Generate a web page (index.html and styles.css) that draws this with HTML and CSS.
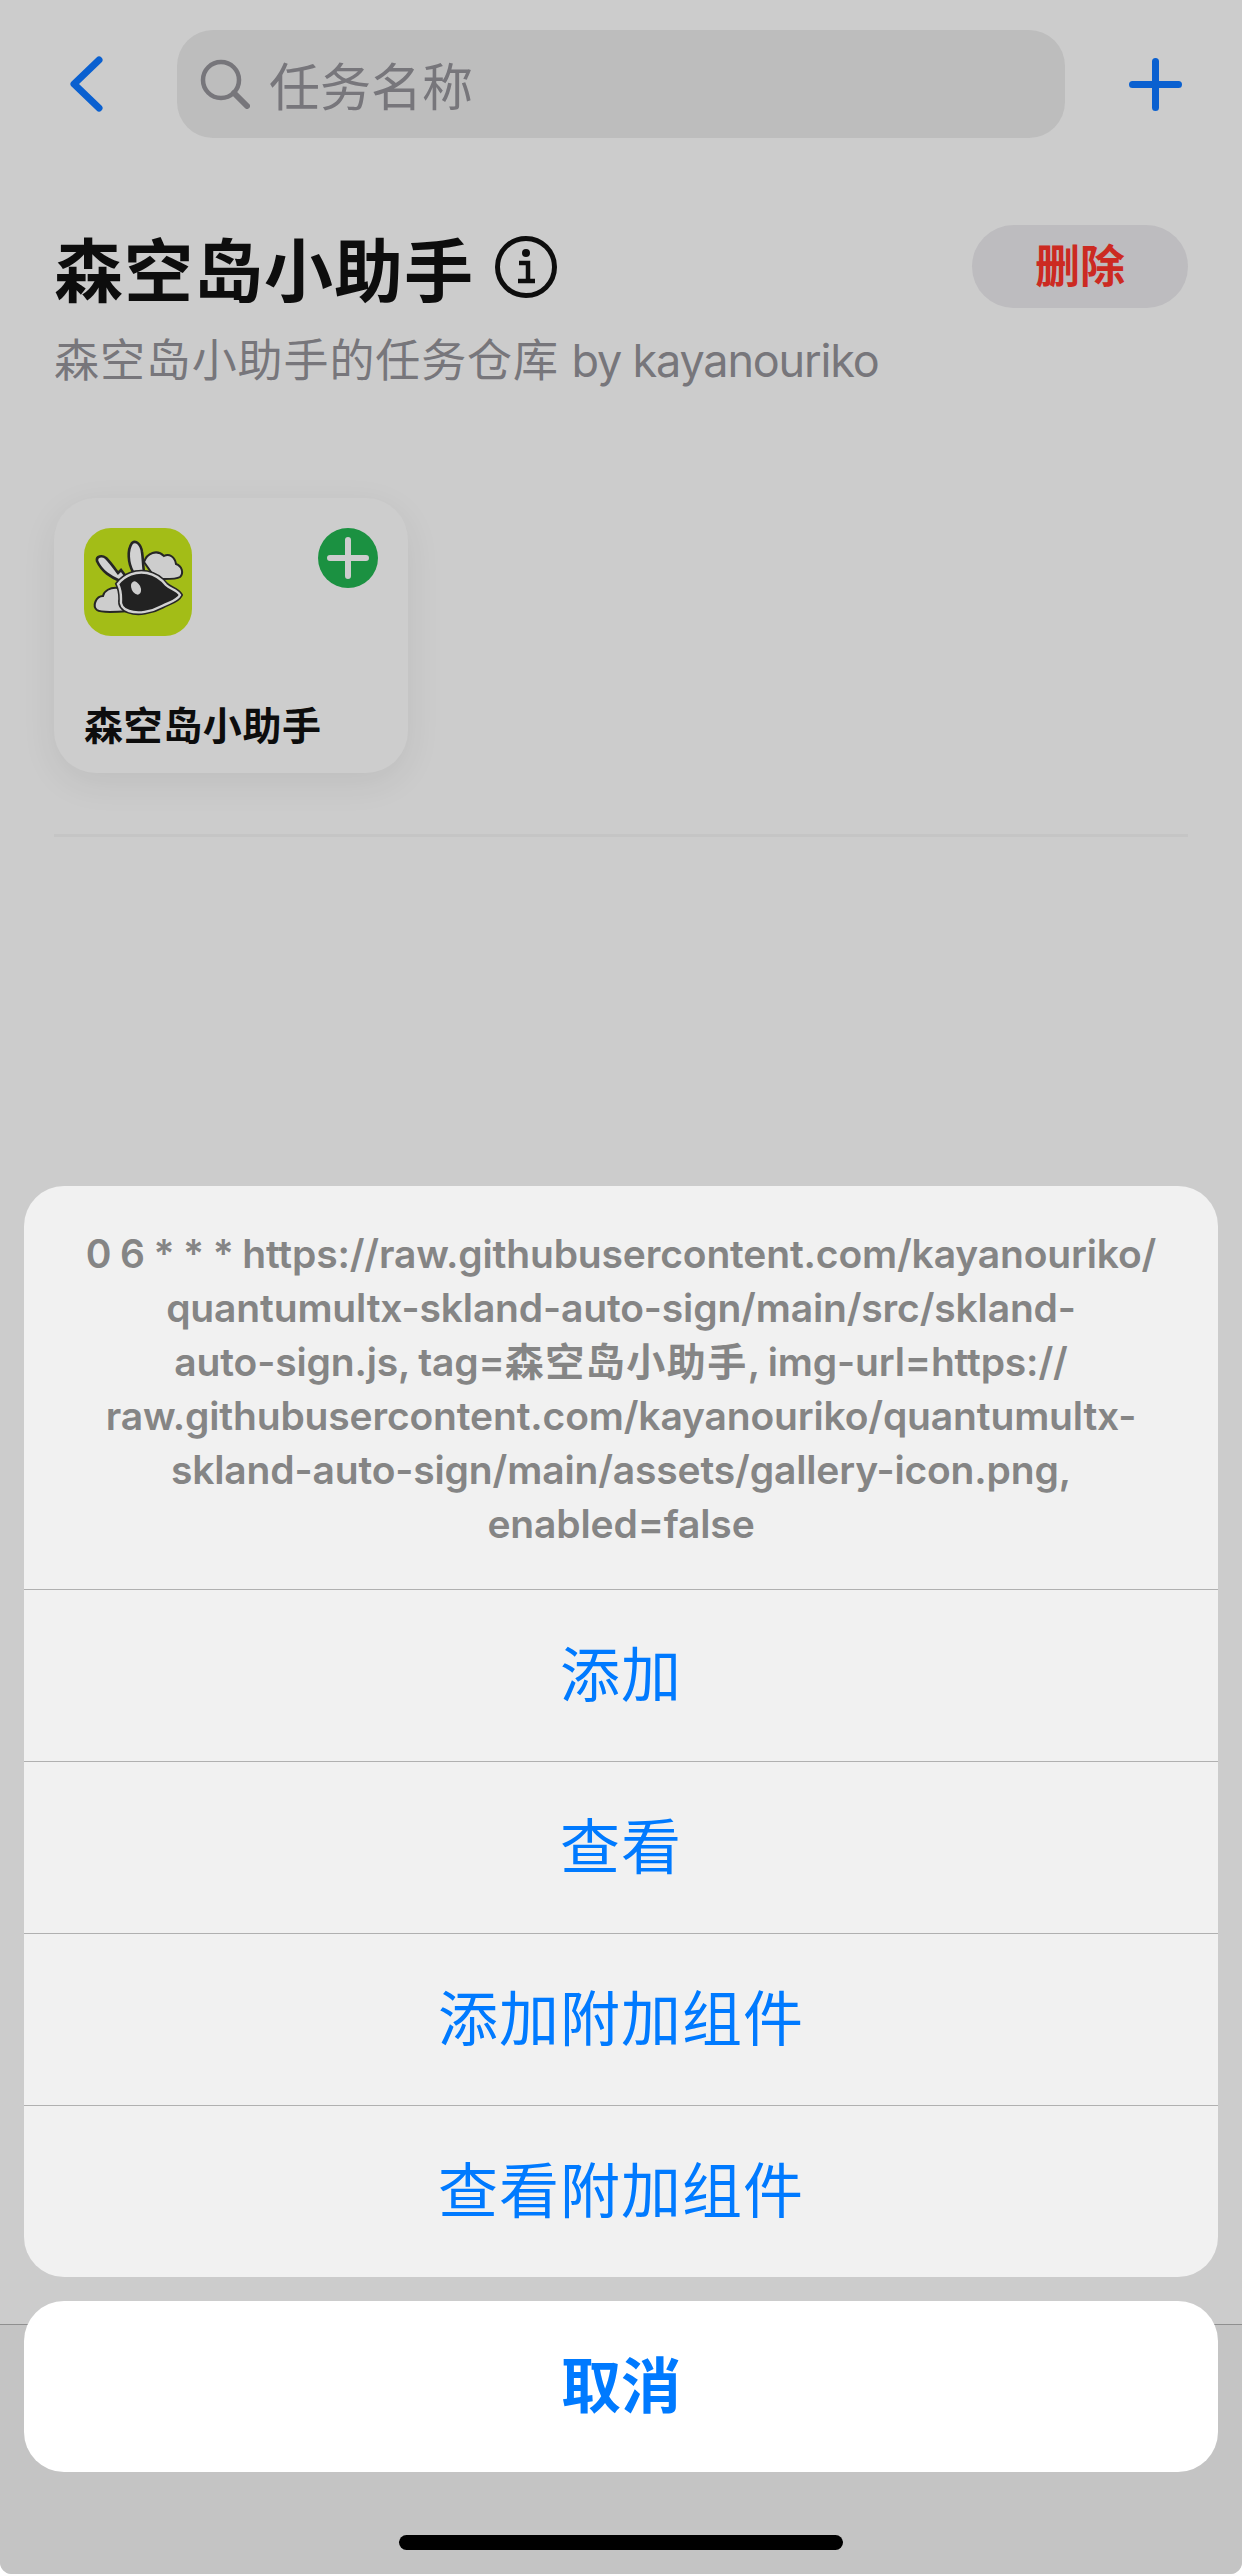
FILE: index.html
```html
<!DOCTYPE html>
<html lang="zh">
<head>
<meta charset="UTF-8">
<meta name="viewport" content="width=device-width, initial-scale=1.0">
<title>森空岛小助手</title>
<link rel="stylesheet" href="styles.css">
</head>
<body>

<div class="page">
  <div class="main">

    <!-- top bar -->
    <div class="topbar">
      <svg class="back" viewBox="0 0 33 56" width="33" height="56"><path d="M29 4 L4 28 L29 52" fill="none" stroke="#0a60d0" stroke-width="7" stroke-linecap="round" stroke-linejoin="round"/></svg>
      <div class="search">
        <svg viewBox="0 0 50 50" width="50" height="50"><circle cx="21" cy="21" r="18" fill="none" stroke="#77767b" stroke-width="4.5"/><path d="M34 34 L47 47" stroke="#77767b" stroke-width="6" stroke-linecap="round"/></svg>
        <span>任务名称</span>
      </div>
      <svg class="add" viewBox="0 0 53 53" width="53" height="53"><path d="M26.5 3.5 V49.5 M3.5 26.5 H49.5" stroke="#0a60d0" stroke-width="7" stroke-linecap="round"/></svg>
    </div>

    <!-- repo heading -->
    <div class="repo">
      <div class="repo-row">
        <h1>森空岛小助手</h1>
        <svg class="info" viewBox="0 0 62 62" width="62" height="62"><circle cx="31" cy="31" r="28.5" fill="none" stroke="#0d0d0d" stroke-width="5"/><circle cx="31" cy="17" r="4" fill="#0d0d0d"/><path d="M24 27 H33 V44 M23 45 H40" fill="none" stroke="#0d0d0d" stroke-width="4.5"/></svg>
        <div class="delete">删除</div>
      </div>
      <p class="repo-desc"><span class="desc-cjk">森空岛小助手的任务仓库</span> <span class="desc-latin">by kayanouriko</span></p>
    </div>

    <!-- task card -->
    <div class="card">
      <div class="card-top">
        <svg class="logo" viewBox="0 0 108 108" width="108" height="108">
          <rect width="108" height="108" rx="27" fill="#a3bd17"/>
          <path d="M60 34 C63 25 73 21 80 28 C85 25 91 29 92 36 C98 38 100 45 96 49 C91 52 80 51 72 51 Z" fill="#cdcdcd" stroke="#262626" stroke-width="2"/>
          <path d="M34 60 C26 59 20 63 19 68 C12 68 8 78 13 82 C17 85 32 84 44 83 Z" fill="#cdcdcd" stroke="#262626" stroke-width="2"/>
          <path d="M36 53 C27 49 18 44 13 33 C12 28 18 27 22 30 C27 35 31 41 34 45 L37 42 L43 50 Z" fill="#d2d2d2" stroke="#262626" stroke-width="2.6"/>
          <path d="M49 44 C44 35 43 22 48 15 C52 12 57 16 58 24 C59 30 59 38 60 44 Z" fill="#d2d2d2" stroke="#262626" stroke-width="2.6"/>
          <path d="M34 56 C41 47 52 43 63 45 C73 47 78 52 82 57 C86 61 93 62 96 67 C93 73 85 74 78 78 C67 84 54 86 45 83 C39 81 36 77 37 71 C37 66 36 60 34 56 Z" fill="#222" stroke="#262626" stroke-width="5.5"/>
          <path d="M34 56 C41 47 52 43 63 45 C73 47 78 52 82 57 C86 61 93 62 96 67 C93 73 85 74 78 78 C67 84 54 86 45 83 C39 81 36 77 37 71 C37 66 36 60 34 56 Z" fill="#222" stroke="#d2d2d2" stroke-width="2.4"/>
          <ellipse cx="52" cy="60" rx="4.5" ry="7" transform="rotate(-25 52 60)" fill="#cdcdcd"/>
        </svg>
        <svg class="card-add" viewBox="0 0 60 60" width="60" height="60"><circle cx="30" cy="30" r="30" fill="#1b9141"/><path d="M30 12 V48 M12 30 H48" stroke="#cdcdcd" stroke-width="6" stroke-linecap="round"/></svg>
      </div>
      <div class="card-name">森空岛小助手</div>
    </div>

    <div class="divider"></div>
  </div>

  <!-- tab bar behind the sheet -->
  <div class="tabbar">
    <div class="home-bar"></div>
  </div>

  <!-- action sheet -->
  <div class="sheet">
    <div class="sheet-group">
      <div class="sheet-msg">0 6 * * * https://raw.githubusercontent.com/kayanouriko/<br>quantumultx-skland-auto-sign/main/src/skland-<br>auto-sign.js, tag=<span class="msg-cjk">森空岛小助手</span>, img-url=https://<br>raw.githubusercontent.com/kayanouriko/quantumultx-<br>skland-auto-sign/main/assets/gallery-icon.png,<br>enabled=false</div>
      <div class="sheet-btn">添加</div>
      <div class="sheet-btn">查看</div>
      <div class="sheet-btn">添加附加组件</div>
      <div class="sheet-btn">查看附加组件</div>
    </div>
    <div class="sheet-cancel">取消</div>
  </div>
</div>

</body>
</html>
```

FILE: styles.css
```css
/* page */
body {
  margin: 0;
  background-color: #fff;
  font-family: "Inter", "Noto Sans CJK SC", sans-serif;
}

.page {
  position: relative;
  width: 1242px;
  height: 2574px;
  overflow: hidden;
  display: flex;
  flex-direction: column;
  background-color: #cccccc;
  border-radius: 0 0 12px 12px;
}

.main {
  flex: 1;
}

/* top bar */
.topbar {
  display: flex;
  align-items: center;
  height: 108px;
  margin-top: 30px;
  padding: 0 60px 0 70px;
}

.search {
  display: flex;
  align-items: center;
  gap: 19px;
  width: 888px;
  height: 108px;
  box-sizing: border-box;
  margin-left: 74px;
  padding-left: 23px;
  background-color: #bdbdbd;
  border-radius: 36px;
  color: #77767b;
  font-size: 51px;
}

.add {
  margin-left: auto;
}

/* repo heading */
.repo {
  margin-top: 87px;
  padding: 0 54px;
}

.repo-row {
  display: flex;
  align-items: center;
  height: 83px;
}

.repo-row h1 {
  margin: 0;
  font-size: 69px;
  font-weight: 700;
  letter-spacing: 1px;
  color: #0d0d0d;
}

.info {
  margin-left: 21px;
}

.delete {
  margin-left: auto;
  width: 216px;
  height: 83px;
  line-height: 83px;
  text-align: center;
  background-color: #bdbcbf;
  border-radius: 42px;
  color: #cc2a22;
  font-size: 45px;
  font-weight: 700;
}

.repo-desc {
  margin: 23px 0 0;
  line-height: 60px;
  font-size: 45px;
  color: #77767b;
}

.desc-cjk {
  letter-spacing: 0.9px;
}

.desc-latin {
  letter-spacing: -1.2px;
}

/* task card */
.card {
  display: flex;
  flex-direction: column;
  justify-content: space-between;
  width: 354px;
  height: 275px;
  box-sizing: border-box;
  margin: 107px 0 0 54px;
  padding: 30px 30px 22px;
  background-color: #cdcdcd;
  border-radius: 42px;
  box-shadow: 0 10px 36px rgba(0, 0, 0, 0.07);
}

.card-top {
  display: flex;
  justify-content: space-between;
  align-items: flex-start;
}

.card-name {
  line-height: 50px;
  font-size: 39px;
  font-weight: 700;
  letter-spacing: 0.6px;
  color: #0d0d0d;
}

.divider {
  height: 3px;
  margin: 61px 54px 0;
  background-color: #c5c5c5;
}

/* tab bar */
.tabbar {
  display: flex;
  justify-content: center;
  align-items: flex-end;
  height: 250px;
  box-sizing: border-box;
  padding-bottom: 24px;
  background-color: #c4c4c4;
  border-top: 1px solid #8f8f8f;
}

.home-bar {
  width: 444px;
  height: 15px;
  background-color: #000;
  border-radius: 8px;
}

/* action sheet */
.sheet {
  position: absolute;
  left: 24px;
  right: 24px;
  bottom: 102px;
  display: flex;
  flex-direction: column;
  gap: 24px;
}

.sheet-group {
  background-color: #f1f1f1;
  border-radius: 40px;
  overflow: hidden;
}

.sheet-msg {
  padding: 41px 20px 38px;
  line-height: 54px;
  text-align: center;
  font-size: 39px;
  font-weight: 600;
  letter-spacing: -0.15px;
  word-spacing: -1px;
  color: #858585;
}

.msg-cjk {
  letter-spacing: 1.5px;
}

.sheet-btn {
  height: 172px;
  line-height: 171px;
  box-sizing: border-box;
  border-top: 1px solid #b0b0b0;
  text-align: center;
  font-size: 60px;
  letter-spacing: 1px;
  color: #007aff;
}

.sheet-cancel {
  height: 171px;
  line-height: 171px;
  text-align: center;
  background-color: #fff;
  border-radius: 40px;
  font-size: 60px;
  font-weight: 700;
  color: #007aff;
}
```
